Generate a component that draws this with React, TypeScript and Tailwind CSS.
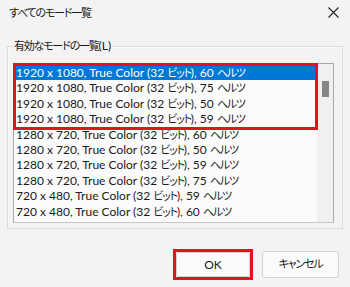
import React from 'react';

const modes = [
  '1920 x 1080, True Color (32 ビット), 60 ヘルツ',
  '1920 x 1080, True Color (32 ビット), 75 ヘルツ',
  '1920 x 1080, True Color (32 ビット), 50 ヘルツ',
  '1920 x 1080, True Color (32 ビット), 59 ヘルツ',
  '1280 x 720, True Color (32 ビット), 60 ヘルツ',
  '1280 x 720, True Color (32 ビット), 50 ヘルツ',
  '1280 x 720, True Color (32 ビット), 59 ヘルツ',
  '1280 x 720, True Color (32 ビット), 75 ヘルツ',
  '720 x 480, True Color (32 ビット), 59 ヘルツ',
  '720 x 480, True Color (32 ビット), 60 ヘルツ',
];

// Japanese runs are set narrower, like Yu Gothic UI next to Segoe UI
function J({ text }: { text: string }) {
  const parts = text.split(/([\u3000-\u30ff\u4e00-\u9fff]+)/);
  return (
    <>
      {parts.map((p, i) =>
        i % 2 === 1 ? (
          <span key={i} className="text-[11px] tracking-[-1.2px] [font-feature-settings:'palt']">
            {p}
          </span>
        ) : (
          <span key={i}>{p}</span>
        )
      )}
    </>
  );
}

export default function App() {
  return (
    <div
      className="w-[350px] h-[287px] bg-[#f3f3f3] text-[#1a1a1a] overflow-hidden flex flex-col"
      style={{ fontFamily: "Lato, 'Noto Sans CJK JP', sans-serif" }}
    >
      {/* title bar */}
      <div className="h-[25px] flex items-center justify-between pl-[9px] pr-[9px]">
        <span className="text-[12px] leading-none"><J text="すべてのモード一覧" /></span>
        <svg width="11" height="11" viewBox="0 0 11 11" className="mr-[2px]">
          <path d="M0.5 0.5 L10.5 10.5 M10.5 0.5 L0.5 10.5" stroke="#222" strokeWidth="1.1" />
        </svg>
      </div>

      {/* group box */}
      <div className="relative mx-[7px] mt-[21px] h-[183px] border border-[#dcdcdc] shadow-[inset_1px_1px_0_#fafafa]">
        <span className="absolute -top-[9px] left-[5px] px-[1px] bg-[#f3f3f3] text-[12px] leading-[16px]">
          <J text="有効なモードの一覧(L)" />
        </span>

        <div className="relative ml-[5px] mt-[16px] w-[321px] h-[160px] border border-[#a8a8a8] border-b-[#c8c8c8] bg-[#fbfbfb] flex">
          <div className="flex-1 pt-[1px] flex flex-col">
            {modes.map((m, i) => (
              <div
                key={i}
                className={`h-[15.4px] pl-[2px] text-[12px] leading-[15.4px] whitespace-nowrap ${
                  i === 0 ? 'bg-[#0078d7] text-white' : ''
                }`}
              >
                <J text={m} />
              </div>
            ))}
          </div>
          <div className="w-[16px] bg-[#f0f0f0] flex justify-center pt-[17px]">
            <div className="w-[7px] h-[16px] bg-[#868686]" />
          </div>

          {/* highlight annotation */}
          <div className="absolute -left-[1px] -top-[1px] w-[305px] h-[67px] border-[3px] border-[#e8101c] pointer-events-none" />
        </div>
      </div>

      {/* buttons */}
      <div className="flex justify-end gap-[9px] pr-[11px] mt-[20px]">
        <div className="relative w-[80px] h-[31px] flex items-center justify-center">
          <div className="w-[74px] h-[25px] bg-[#fbfbfb] rounded-[3px] border border-[#d2d2d2] flex items-center justify-center text-[12px]">
            OK
          </div>
          <div className="absolute inset-0 border-[3px] border-[#e8101c]" />
        </div>
        <div className="w-[77px] h-[27px] mt-[2px] bg-[#fbfbfb] rounded-[3px] border border-[#d2d2d2] flex items-center justify-center text-[12px]">
          <J text="キャンセル" />
        </div>
      </div>
    </div>
  );
}
